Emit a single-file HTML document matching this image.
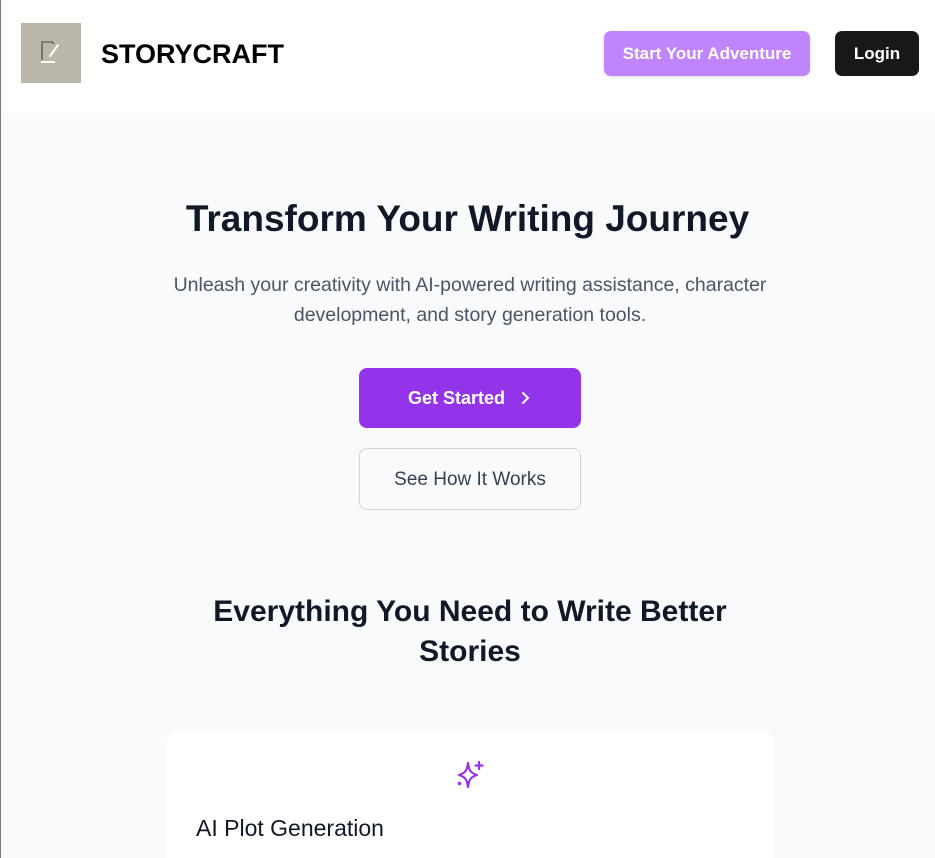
<!DOCTYPE html>
<html><head><meta charset="utf-8"><style>
*{box-sizing:border-box;margin:0;padding:0}
html,body{width:935px;height:858px;overflow:hidden}
body{background:#f9fafb;font-family:"Liberation Sans",sans-serif;position:relative}
.edge{position:absolute;left:0;top:0;width:1px;height:858px;background:#777;z-index:5}
header{height:113px;background:#fff;position:relative}
.logo{position:absolute;left:21px;top:23px;width:60px;height:60px;background:#bbb8a9}
.brand{position:absolute;left:101px;top:39px;font-size:27px;font-weight:bold;color:#000}
.b1{position:absolute;left:604px;top:31px;width:206px;height:45px;border-radius:7px;background:#c084fc;color:#fff;font-size:17px;font-weight:bold;text-align:center;line-height:45px;box-shadow:0 1px 3px rgba(0,0,0,.15)}
.b2{position:absolute;left:835px;top:31px;width:84px;height:45px;border-radius:7px;background:#18181b;color:#fff;font-size:17px;font-weight:bold;text-align:center;line-height:45px}
h1{position:absolute;top:198px;left:0;width:935px;text-align:center;font-size:37px;color:#111827}
.sub{position:absolute;top:270px;left:150px;width:640px;text-align:center;font-size:19.5px;line-height:30px;color:#4b5563}
.gs{position:absolute;left:359px;top:368px;width:222px;height:60px;border-radius:8px;background:#9333ea;color:#fff;font-size:18px;font-weight:bold;text-align:center;line-height:60px}
.sh{position:absolute;left:359px;top:448px;width:222px;height:62px;border-radius:8px;border:1px solid #d1d5db;background:#f9fafb;color:#374151;font-size:19px;text-align:center;line-height:62px}
h2{position:absolute;top:592px;left:170px;width:600px;text-align:center;font-size:30px;line-height:40px;color:#111827}
.card{position:absolute;left:166px;top:730px;width:608px;height:140px;background:#fff;border-radius:14px}
.card h3{position:absolute;left:30px;top:85px;font-size:23px;font-weight:normal;color:#111827}
</style></head><body>
<div class="edge"></div>
<header>
<div class="logo"><svg width="60" height="60" viewBox="0 0 60 60"><path d="M21 37V19h10l2 2" fill="none" stroke="#666" stroke-width="1.6"/><path d="M29 33l8-11" stroke="#fff" stroke-width="2" stroke-linecap="round"/><path d="M20 39h14" stroke="#fff" stroke-width="1.8"/></svg></div>
<div class="brand">STORYCRAFT</div>
<div class="b1">Start Your Adventure</div>
<div class="b2">Login</div>
</header>
<h1>Transform Your Writing Journey</h1>
<div class="sub">Unleash your creativity with AI-powered writing assistance, character development, and story generation tools.</div>
<div class="gs">Get Started &nbsp;&nbsp;<svg width="12" height="14" viewBox="0 0 12 14" style="vertical-align:-1px"><path d="M3 2l5 5-5 5" fill="none" stroke="#fff" stroke-width="2" stroke-linecap="round"/></svg></div>
<div class="sh">See How It Works</div>
<h2>Everything You Need to Write Better Stories</h2>
<div class="card">
<svg style="position:absolute;left:289px;top:30px" width="30" height="30" viewBox="0 0 30 30"><path d="M13 3C14 11 16 13 22 15C16 17 14 19 13 27C12 19 10 17 4 15C10 13 12 11 13 3Z" fill="none" stroke="#9333ea" stroke-width="2.2" stroke-linejoin="round"/><path d="M24 2v7M20.5 5.5h7" stroke="#9333ea" stroke-width="2.2" stroke-linecap="round"/><circle cx="4.5" cy="23.5" r="1.8" fill="#9333ea"/></svg>
<h3>AI Plot Generation</h3>
</div>
</body></html>
